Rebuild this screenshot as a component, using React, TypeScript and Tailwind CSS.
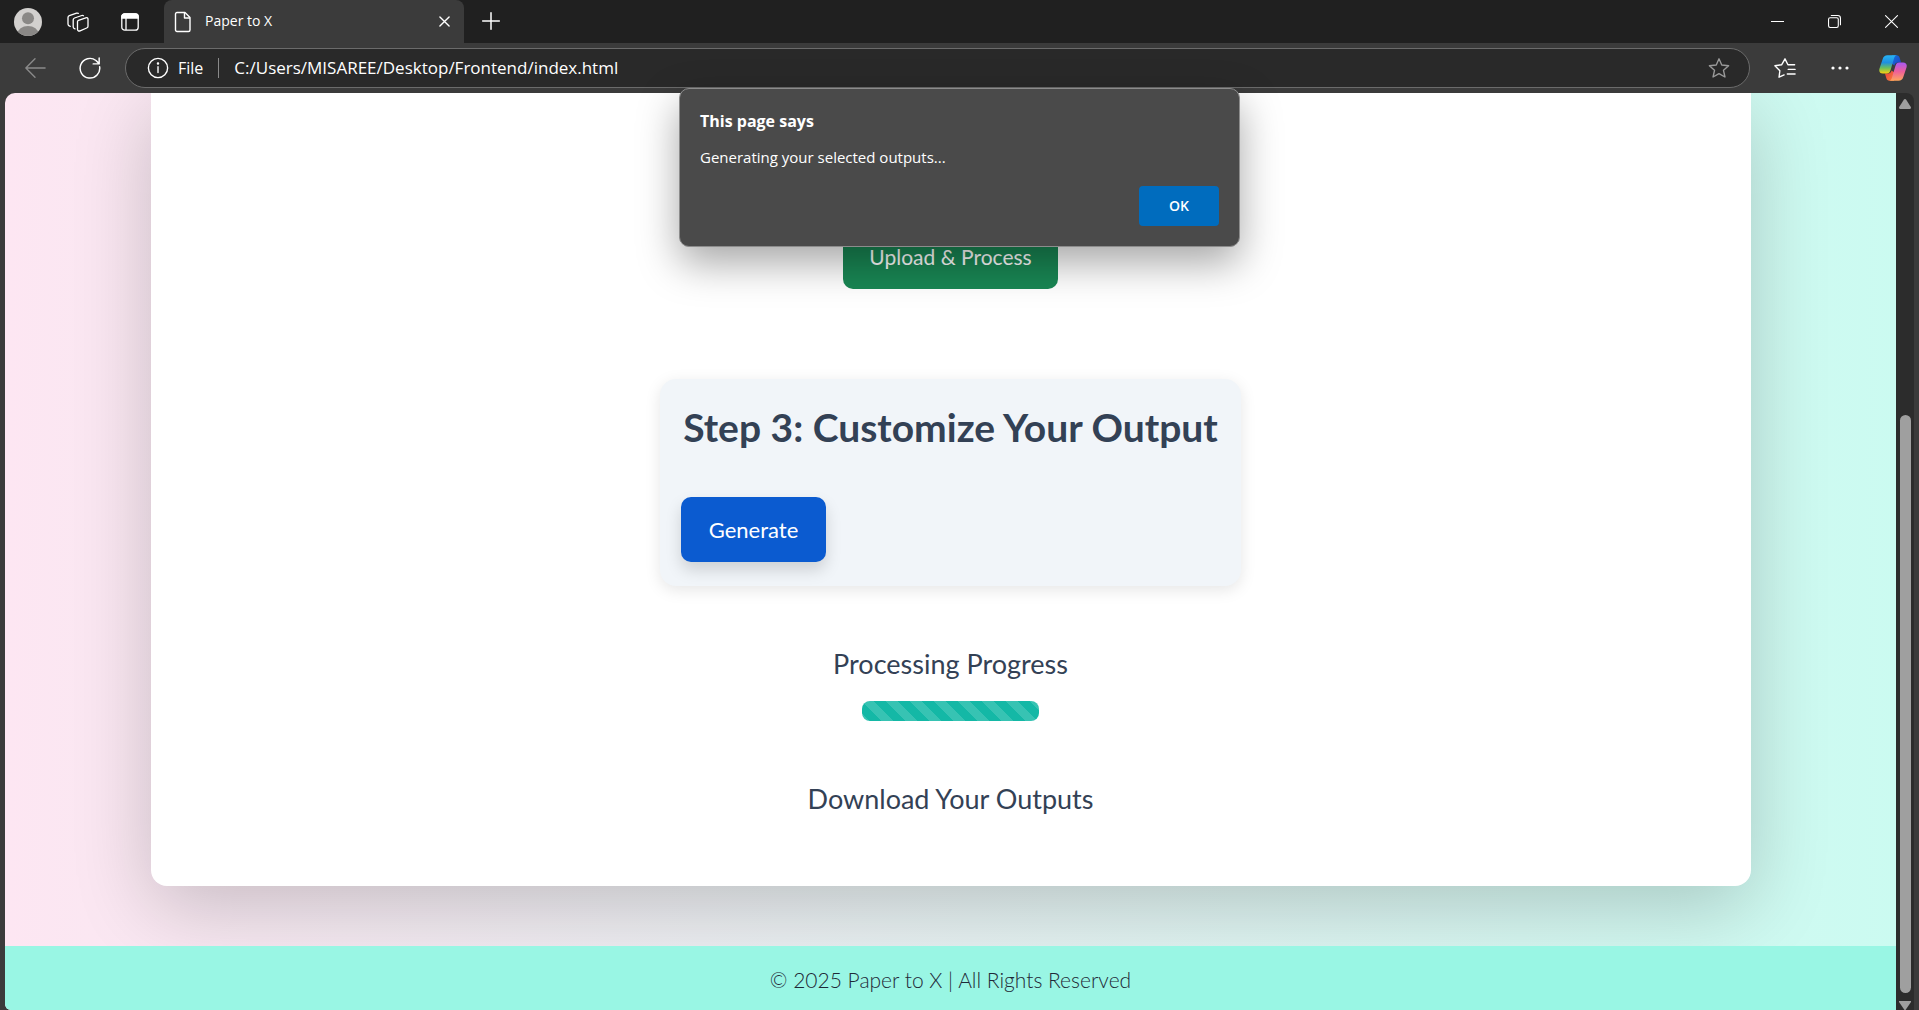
import { useState, type ReactNode } from "react";

function Icon({ children, className = "size-5" }: { children: ReactNode; className?: string }) {
  return (
    <svg viewBox="0 0 24 24" fill="none" stroke="currentColor" strokeWidth="1.5" strokeLinecap="round" strokeLinejoin="round" className={className} aria-hidden="true">
      {children}
    </svg>
  );
}

function Avatar() {
  return (
    <svg viewBox="0 0 28 28" className="size-7" aria-hidden="true">
      <clipPath id="avatar"><circle cx="14" cy="14" r="14" /></clipPath>
      <g clipPath="url(#avatar)">
        <rect width="28" height="28" fill="#d2d0ce" />
        <circle cx="14" cy="10.3" r="6" fill="#8a8886" />
        <ellipse cx="14" cy="26" rx="10.5" ry="8" fill="#8a8886" />
      </g>
    </svg>
  );
}

function Copilot() {
  return (
    <svg viewBox="0 0 28 26" className="h-[26px] w-7" aria-hidden="true">
      <defs>
        <linearGradient id="cp1" x1="0" y1="0" x2="0" y2="1">
          <stop offset="0" stopColor="#27b4f5" /><stop offset=".4" stopColor="#1f8fe0" /><stop offset=".7" stopColor="#6cc05b" /><stop offset="1" stopColor="#fbd00f" />
        </linearGradient>
        <linearGradient id="cp2" x1="0" y1="0" x2="0" y2="1">
          <stop offset="0" stopColor="#a758f5" /><stop offset=".5" stopColor="#ee5f9a" /><stop offset="1" stopColor="#ffa55c" />
        </linearGradient>
        <linearGradient id="cp3" x1="0" y1="0" x2="1" y2="1">
          <stop offset="0" stopColor="#1474dc" /><stop offset="1" stopColor="#1e3fc4" />
        </linearGradient>
        <linearGradient id="cp4" x1="0" y1="0" x2="1" y2="1">
          <stop offset="0" stopColor="#e8383c" /><stop offset="1" stopColor="#f9843c" />
        </linearGradient>
      </defs>
      <path d="M13 .3h4.500c1.800 0 2.700 1 3.200 2.700l1.400 4.600H19c-2 0-3 1-3.600 3L12 8Z" fill="url(#cp3)" />
      <path d="M15 25.700h-4.500c-1.800 0-2.700-1-3.200-2.700l-1.400-4.600H9c2 0 3-1 3.600-3L16 18Z" fill="url(#cp4)" />
      <path d="M8.500.3H18c-1.700 0-2.500 1.500-3 3.200L11.600 15c-.7 2.400-1.800 3.500-4 3.500H4c-3.200 0-4.300-2-3.500-5L3.700 4C4.500 1.500 6 .3 8.500.3Z" fill="url(#cp1)" />
      <path d="M19.500 25.700H10c1.700 0 2.500-1.500 3-3.200L16.400 11c.7-2.400 1.800-3.500 4-3.500H24c3.200 0 4.300 2 3.500 5L24.300 22c-.8 2.500-2.300 3.700-4.800 3.700Z" fill="url(#cp2)" />
    </svg>
  );
}

function TabStrip() {
  return (
    <header className="flex h-[43px] shrink-0 items-center bg-[#202020]">
      <div className="flex w-[164px] shrink-0 items-center pl-[14px]">
        <button aria-label="Profile"><Avatar /></button>
        <button aria-label="Workspaces" className="ml-[25px]">
          <svg viewBox="0 0 22 20" className="h-5 w-[22px]" fill="none" stroke="currentColor" strokeWidth="1.3" strokeLinecap="round" strokeLinejoin="round" aria-hidden="true">
            <path d="m11.500 8.300 7.300-2.500c1.300-.4 2.200.200 2.200 1.300v7.200c0 .8-.5 1.400-1.300 1.700l-6.600 2.800c-1.400.5-2.600 0-2.600-1.200V9.600c0-.6.400-1.100 1-1.300Z" />
            <path d="M8 16.800c-1-.2-1.800-.8-1.800-1.800V7.800c0-.9.500-1.500 1.300-1.800l7.300-2.500c.6-.2 1.200-.1 1.700.2" />
            <path d="M3.200 14.300C2 14 1 13.300 1 12.300V5.500c0-.9.500-1.500 1.300-1.800L9.600 1.200c.6-.2 1.200-.1 1.700.2" />
          </svg>
        </button>
        <button aria-label="Tab actions" className="ml-8">
          <svg viewBox="0 0 18 18" className="size-[18px]" fill="none" stroke="currentColor" strokeWidth="1.3" aria-hidden="true">
            <rect x=".8" y=".8" width="16.4" height="16.4" rx="3" />
            <path d="M5 5v12" />
            <path d="M.8 5V3.500A2.700 2.700 0 0 1 3.500.8h11a2.700 2.700 0 0 1 2.700 2.700V5Z" fill="currentColor" />
          </svg>
        </button>
      </div>
      <div className="flex h-full w-[300px] items-center rounded-t-lg bg-[#3b3b3b] pr-[10px] pl-[10px]">
        <svg viewBox="0 0 18 22" className="h-[22px] w-[18px]" fill="none" stroke="currentColor" strokeWidth="1.4" strokeLinejoin="round" aria-hidden="true">
          <path d="M3 1.500h8l5 5V19a1.500 1.500 0 0 1-1.500 1.500H3A1.500 1.500 0 0 1 1.500 19V3A1.500 1.500 0 0 1 3 1.500Z" />
          <path d="M10.500 1.500V7H16" />
        </svg>
        <span className="ml-[13px] flex-1 pb-0.5 text-sm">Paper to X</span>
        <button aria-label="Close tab" className="p-1">
          <Icon className="size-[11px]"><path d="M2 2l20 20M22 2 2 22" strokeWidth="3" /></Icon>
        </button>
      </div>
      <button aria-label="New tab" className="ml-[17px] pb-0.5">
        <Icon className="size-5"><path d="M12 2v20M2 12h20" strokeWidth="1.8" /></Icon>
      </button>
      <div className="ml-auto flex items-center gap-[44px] pr-[21px]">
        <button aria-label="Minimize"><Icon className="size-[13px]"><path d="M0 12h24" strokeWidth="2" /></Icon></button>
        <button aria-label="Restore">
          <Icon className="size-[13px]">
            <rect x="1" y="5" width="18" height="18" rx="3" strokeWidth="2" />
            <path d="M6 1h12a5 5 0 0 1 5 5v12" strokeWidth="2" />
          </Icon>
        </button>
        <button aria-label="Close"><Icon className="size-[13px]"><path d="M1 1l22 22M23 1 1 23" strokeWidth="2" /></Icon></button>
      </div>
    </header>
  );
}

function Toolbar() {
  return (
    <nav className="flex h-[50px] shrink-0 items-center bg-[#3b3b3b]">
      <div className="flex w-[125px] shrink-0 items-center gap-[33px] pl-6">
        <button aria-label="Back" className="text-[#8a8a8a]"><Icon className="size-[22px]"><path d="M23 12H2M12 2 2 12l10 10" /></Icon></button>
        <button aria-label="Reload"><Icon className="size-[22px]"><path d="M22.500 10.500A10.700 10.700 0 1 1 18.500 3.800l3.500 3.400M22 1v6.500h-6.500" strokeWidth="1.6" /></Icon></button>
      </div>
      <div className="flex h-10 flex-1 items-center rounded-full border border-[#6b6b6b] bg-[#292929] pr-[19px] pl-[21px]">
        <Icon className="size-[22px]"><circle cx="12" cy="12" r="10.5" /><path d="M12 10.500V17" /><circle cx="12" cy="7" r=".6" fill="currentColor" /></Icon>
        <span className="ml-[9px] text-base">File</span>
        <span className="mx-[15px] h-5 w-px bg-[#8a8a8a]" />
        <input aria-label="Address" defaultValue="C:/Users/MISAREE/Desktop/Frontend/index.html" className="min-w-0 flex-1 bg-transparent text-[17px] outline-none" />
        <button aria-label="Add to favorites" className="text-[#9a9a9a]">
          <Icon className="size-[22px]"><path d="m12 2 3 6.700 7.500.8-5.600 5 1.600 7.300-6.500-3.700-6.500 3.700 1.600-7.300-5.600-5 7.500-.8Z" /></Icon>
        </button>
      </div>
      <div className="flex w-[169px] shrink-0 items-center pl-6">
        <button aria-label="Favorites">
          <Icon className="size-[22px]"><path d="M11 19.500 5.500 22l.9-7L1 9.500l7.300-1L12 2l3.200 6.500h7.300M15.500 13.500h7.500M14.500 18.500H23" /></Icon>
        </button>
        <button aria-label="Settings and more" className="ml-[35px]">
          <svg viewBox="0 0 18 4" className="h-1 w-[18px]" fill="currentColor" aria-hidden="true"><circle cx="2" cy="2" r="1.6" /><circle cx="9" cy="2" r="1.6" /><circle cx="16" cy="2" r="1.6" /></svg>
        </button>
        <button aria-label="Copilot" className="ml-[30px]"><Copilot /></button>
      </div>
    </nav>
  );
}

function AlertDialog({ onClose }: { onClose: () => void }) {
  return (
    <div role="alertdialog" aria-labelledby="dialog-title" aria-describedby="dialog-text" className="absolute inset-x-0 top-[88px] mx-auto flex h-[159px] w-[561px] flex-col rounded-[10px] border border-[#8c8c8c] bg-[#4a4a4a] px-5 pt-5 pb-5 shadow-[0_16px_40px_rgba(0,0,0,0.35)]">
      <h2 id="dialog-title" className="text-base leading-6 font-bold">This page says</h2>
      <p id="dialog-text" className="mt-3 text-[15px] leading-6">Generating your selected outputs...</p>
      <button onClick={onClose} className="mt-auto h-10 w-20 self-end rounded bg-[#006cbe] text-sm font-semibold">OK</button>
    </div>
  );
}

function Page() {
  return (
    <main className="flex min-w-0 flex-1 flex-col overflow-hidden rounded-tl-[10px] rounded-bl-md bg-linear-to-r from-[#fde6f2] to-[#cbfbf1] font-['Lato',sans-serif] text-[#334155]">
      <div className="mx-auto mb-[60px] flex w-full max-w-[1600px] flex-1 flex-col items-center rounded-b-2xl bg-white shadow-[0_20px_80px_rgba(0,0,0,0.2)]">
        <button className="h-[196px] w-[215px] shrink-0 rounded-[10px] bg-[#198754] pt-[152px] pb-5 text-[21px] leading-6 text-white">Upload &amp; Process</button>
        <section className="mt-[90px] flex h-[207px] w-[581px] shrink-0 flex-col rounded-2xl bg-[#f1f5f9] px-[21px] pt-6 shadow-[0_4px_16px_rgba(0,0,0,0.1)]">
          <h2 className="text-center text-[39px] leading-[48px] font-bold whitespace-nowrap">Step 3: Customize Your Output</h2>
          <button className="mt-[46px] h-[65px] w-[145px] rounded-[10px] bg-[#0b5bd0] text-[22px] text-white shadow-[0_8px_16px_rgba(0,0,0,0.15)]">Generate</button>
        </section>
        <h3 className="mt-[60px] text-[27px] leading-9">Processing Progress</h3>
        <div role="progressbar" aria-label="Processing Progress" className="mt-[19px] h-5 w-[177px] rounded-lg bg-[#14b8a6] bg-[linear-gradient(45deg,rgba(255,255,255,0.15)_25%,transparent_25%,transparent_50%,rgba(255,255,255,0.15)_50%,rgba(255,255,255,0.15)_75%,transparent_75%)] bg-size-[24px_24px]" />
        <h3 className="mt-[60px] text-[27px] leading-9">Download Your Outputs</h3>
      </div>
      <footer className="flex h-16 shrink-0 items-center justify-center bg-[#99f6e4] pt-1 text-[21px] font-light text-[#1f2937]">© 2025 Paper to X | All Rights Reserved</footer>
    </main>
  );
}

function Scrollbar() {
  return (
    <div className="flex w-[18px] shrink-0 flex-col items-center rounded-tr-lg bg-[#2c2c2c]" aria-hidden="true">
      <svg viewBox="0 0 12 10" className="mt-[6px] h-[10px] w-3 shrink-0" fill="#9f9f9f"><path d="M6 0c.5 0 .9.300 1.200.7L11.800 8c.5 1 0 2-1 2H1.200c-1 0-1.500-1-1-2L4.800.7C5.100.3 5.500 0 6 0Z" /></svg>
      <div className="mt-[306px] w-[11px] flex-1 rounded-full bg-[#9f9f9f]" />
      <svg viewBox="0 0 12 9" className="mt-2 h-[9px] w-3 shrink-0" fill="#9f9f9f"><path d="M0 0h12v1L6.500 9h-1L0 1Z" /></svg>
    </div>
  );
}

export default function App() {
  const [open, setOpen] = useState(true);
  return (
    <div className="relative flex h-screen flex-col overflow-hidden bg-[#3b3b3b] font-['Open_Sans',sans-serif] text-white">
      <TabStrip />
      <Toolbar />
      <div className="flex min-h-0 flex-1 px-[5px]">
        <Page />
        <Scrollbar />
      </div>
      {open && <AlertDialog onClose={() => setOpen(false)} />}
    </div>
  );
}
